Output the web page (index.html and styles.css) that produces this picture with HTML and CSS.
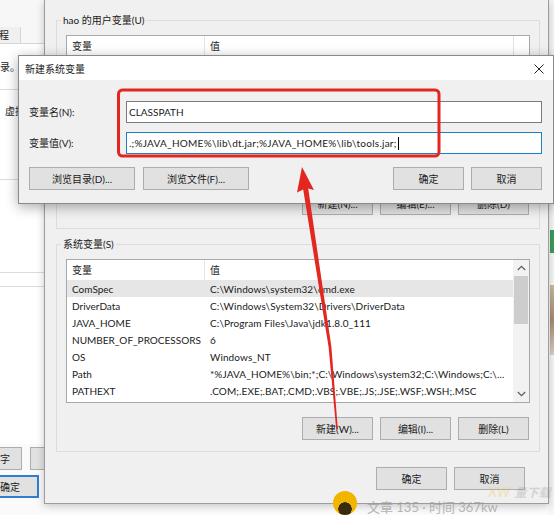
FILE: index.html
```html
<!DOCTYPE html>
<html lang="zh-CN">
<head>
<meta charset="utf-8">
<title>新建系统变量</title>
<link rel="stylesheet" href="styles.css">
</head>
<body>
<div class="desk">
  <div class="strip">
    <div class="strip-green"></div>
    <div class="strip-photo"></div>
  </div>

  <aside class="sp">
    <div class="sp-head"></div>
    <div class="sp-tabs"><span class="sp-tab"><span>程</span></span></div>
    <div class="sp-panel">
      <div class="sp-text t1"><span>录。</span></div>
      <div class="sp-rule r1"></div>
      <div class="sp-text t2"><span>虚拟</span></div>
      <div class="sp-rule r2"></div>
      <div class="sp-rule r3"></div>
      <div class="sp-rule r4"></div>
    </div>
    <div class="sp-foot">
      <div class="sp-row one"><span class="sp-btn b1"><span>字</span></span><span class="sp-btn b2"></span></div>
      <div class="sp-row two"><span class="sp-btn ok"><span>确定</span></span></div>
    </div>
  </aside>

  <section class="env">
    <div class="group g-user">
      <div class="group-label">hao 的用户变量(U)</div>
      <div class="list list-user">
        <div class="lv-main">
          <div class="lv-head"><span class="c1">变量</span><span class="c2">值</span></div>
        </div>
        <div class="scroll"></div>
      </div>
      <div class="btn-row">
        <button class="btn">新建(N)...</button>
        <button class="btn">编辑(E)...</button>
        <button class="btn">删除(D)</button>
      </div>
    </div>

    <div class="group g-sys">
      <div class="group-label">系统变量(S)</div>
      <div class="list list-sys">
        <div class="lv-main">
          <div class="lv-head"><span class="c1">变量</span><span class="c2">值</span></div>
          <div class="lv-row sel"><span class="c1">ComSpec</span><span class="c2">C:\Windows\system32\cmd.exe</span></div>
          <div class="lv-row"><span class="c1">DriverData</span><span class="c2">C:\Windows\System32\Drivers\DriverData</span></div>
          <div class="lv-row"><span class="c1">JAVA_HOME</span><span class="c2">C:\Program Files\Java\jdk1.8.0_111</span></div>
          <div class="lv-row"><span class="c1">NUMBER_OF_PROCESSORS</span><span class="c2">6</span></div>
          <div class="lv-row"><span class="c1">OS</span><span class="c2">Windows_NT</span></div>
          <div class="lv-row"><span class="c1">Path</span><span class="c2">*%JAVA_HOME%\bin;*;C:\Windows\system32;C:\Windows;C:\...</span></div>
          <div class="lv-row"><span class="c1">PATHEXT</span><span class="c2">.COM;.EXE;.BAT;.CMD;.VBS;.VBE;.JS;.JSE;.WSF;.WSH;.MSC</span></div>
        </div>
        <div class="scroll">
          <span class="sb-btn"><svg width="9" height="6" viewBox="0 0 9 6"><path d="M0.8 5 L4.5 1.3 L8.2 5" fill="none" stroke="#606060" stroke-width="1.3"/></svg></span>
          <span class="sb-thumb"></span>
          <span class="sb-track"></span>
          <span class="sb-btn"><svg width="9" height="6" viewBox="0 0 9 6"><path d="M0.8 1 L4.5 4.7 L8.2 1" fill="none" stroke="#606060" stroke-width="1.3"/></svg></span>
        </div>
      </div>
      <div class="btn-row">
        <button class="btn">新建(W)...</button>
        <button class="btn">编辑(I)...</button>
        <button class="btn">删除(L)</button>
      </div>
    </div>

    <div class="env-foot">
      <button class="btn">确定</button>
      <button class="btn">取消</button>
    </div>
  </section>

  <section class="dlg">
    <header class="dlg-title">
      <span>新建系统变量</span>
      <svg class="close" width="10" height="10" viewBox="0 0 10 10"><path d="M0.5 0.5 L9.5 9.5 M9.5 0.5 L0.5 9.5" stroke="#222" stroke-width="1"/></svg>
    </header>
    <div class="dlg-body">
      <div class="dlg-row">
        <label class="dlg-label">变量名(N):</label>
        <div class="field">CLASSPATH</div>
      </div>
      <div class="dlg-row">
        <label class="dlg-label">变量值(V):</label>
        <div class="field focus"><span class="caret">.;%JAVA_HOME%\lib\dt.jar;%JAVA_HOME%\lib\tools.jar;</span></div>
      </div>
      <div class="dlg-btns">
        <button class="btn wide">浏览目录(D)...</button>
        <button class="btn wide">浏览文件(F)...</button>
        <span class="spacer"></span>
        <button class="btn">确定</button>
        <button class="btn">取消</button>
      </div>
    </div>
  </section>

  <div class="bottom-note">
    <span class="avatar"></span>
    <span class="note-text">文章 135 · 时间 367kw</span>
  </div>
  <div class="watermark"><span class="wm-x">XW</span><span class="wm-t">量下载</span></div>

  <svg class="annot" width="554" height="515" viewBox="0 0 554 515">
    <rect x="118.5" y="90" width="320.5" height="66" rx="4" ry="4" fill="none" stroke="#e3261f" stroke-width="3"/>
    <polygon fill="#e3261f" points="302,167 314,190 308.2,188.6 331.4,347 337.8,429 336.2,429 328.6,347 303.2,189.4 297,192.5"/>
  </svg>
</div>
</body>
</html>
```

FILE: styles.css
```css
* { box-sizing: border-box; }

html, body {
  margin: 0;
  padding: 0;
}

body {
  width: 554px;
  height: 515px;
  overflow: hidden;
  background: #ffffff;
  font-family: Lato, "Noto Sans CJK SC", sans-serif;
  font-size: 10px;
  line-height: 12px;
  color: #1a1a1a;
}

.desk {
  position: relative;
  width: 554px;
  height: 515px;
  overflow: hidden;
  background: #fbfbfb;
}

/* desktop strip on the right */
.strip {
  position: absolute;
  left: 549px;
  top: 0;
  width: 5px;
  height: 515px;
  display: flex;
  flex-direction: column;
  background: #f6f6f6;
}
.strip-green {
  margin-top: 230px;
  height: 23px;
  margin-left: 1px;
  background: #3a9b5c;
}
.strip-photo {
  margin-top: 32px;
  height: 70px;
  margin-left: 1px;
  background: linear-gradient(#c9b8a4, #a48a70 50%, #d8cfc4);
}

/* System properties window behind */
.sp {
  position: absolute;
  left: 0;
  top: 0;
  width: 45px;
  height: 515px;
  display: flex;
  flex-direction: column;
  background: #f4f4f4;
}
.sp-head { height: 27px; background: #f7f7f7; }
.sp-tabs {
  height: 17px;
  display: flex;
  border-bottom: 1px solid #d6d6d6;
  background: #f7f7f7;
}
.sp-tab {
  width: 21px;
  display: flex;
  justify-content: flex-end;
  align-items: center;
  border-right: 1px solid #d6d6d6;
  background: #f0f0f0;
  padding-right: 11px;
  white-space: nowrap;
}
.sp-panel {
  height: 400px;
  background: #ffffff;
  display: flex;
  flex-direction: column;
}
.sp-text {
  display: flex;
  white-space: nowrap;
  height: 12px;
}
.sp-text.t1 { margin-top: 17px; }
.sp-text.t2 { margin-top: 15px; padding-left: 5px; }
.sp-rule { height: 1px; background: #dcdcdc; }
.sp-rule.r1 { margin-top: 16px; }
.sp-rule.r2 { margin-top: 62px; }
.sp-rule.r3 { margin-top: 92px; }
.sp-rule.r4 { margin-top: 13px; }
.sp-foot {
  flex: 1;
  background: #fafafa;
  display: flex;
  flex-direction: column;
}
.sp-row { display: flex; gap: 8px; }
.sp-row.one { margin-top: 3px; }
.sp-row.two { margin-top: 5px; }
.sp-btn {
  height: 23px;
  display: flex;
  align-items: center;
  white-space: nowrap;
  background: #e1e1e1;
  border: 1px solid #adadad;
  border-left: none;
}
.sp-btn.b1 { width: 29px; }
.sp-btn.b2 { width: 20px; border-left: 1px solid #adadad; border-right: none; }
.sp-btn.ok {
  width: 39px;
  height: 23px;
  border: 2px solid #2f7fd0;
  border-left: none;
}

/* Environment variables window */
.env {
  position: absolute;
  left: 44px;
  top: 0;
  width: 505px;
  height: 504px;
  background: #f0f0f0;
  border: 1px solid #9c9c9c;
  border-top: none;
  box-shadow: 0 2px 8px rgba(0, 0, 0, 0.22);
  padding: 20px 8px 0 11px;
  display: flex;
  flex-direction: column;
}

.group {
  border: 1px solid #dcdcdc;
  display: flex;
  flex-direction: column;
  padding: 0 9px;
}
.group-label {
  align-self: flex-start;
  margin: -7px 0 0 -5px;
  padding: 0 2px;
  background: #f0f0f0;
  height: 12px;
  white-space: nowrap;
}
.g-user { height: 209px; }
.g-sys { height: 208px; margin-top: 15px; }

.list {
  display: flex;
  background: #ffffff;
  border: 1px solid #a8a8a8;
  margin-top: 9px;
}
.list-user { height: 150px; }
.list-sys { height: 144px; }

.lv-main {
  flex: 1;
  display: flex;
  flex-direction: column;
  min-width: 0;
}
.lv-head {
  height: 20px;
  display: flex;
  align-items: center;
}
.lv-head .c1 { border-right: 1px solid #e5e5e5; height: 20px; display: flex; align-items: center; }
.lv-row {
  height: 17px;
  display: flex;
  align-items: center;
  white-space: nowrap;
}
.lv-row.sel { background: #e6e6e6; }
.c1 {
  width: 138px;
  flex: none;
  padding-left: 5px;
}
.c2 {
  padding-left: 5px;
  overflow: hidden;
  letter-spacing: 0.1px;
}

.scroll {
  width: 16px;
  flex: none;
  display: flex;
  flex-direction: column;
  background: #f2f2f2;
}
.list-user .scroll { background: #ffffff; border-left: 1px solid #e2e2e2; }
.sb-btn {
  height: 16px;
  display: flex;
  align-items: center;
  justify-content: center;
}
.sb-thumb {
  height: 48px;
  margin: 0 1px;
  background: #cdcdcd;
}
.sb-track { flex: 1; }

.btn-row {
  display: flex;
  justify-content: flex-end;
  gap: 7px;
  margin-top: 7px;
  padding-right: 1px;
}
.g-sys .btn-row { margin-top: 14px; }

.btn {
  font: inherit;
  color: inherit;
  width: 71px;
  height: 23px;
  padding: 0;
  margin: 0;
  display: flex;
  align-items: center;
  justify-content: center;
  background: #e1e1e1;
  border: 1px solid #adadad;
  border-radius: 0;
  white-space: nowrap;
}

.env-foot {
  display: flex;
  justify-content: flex-end;
  gap: 7px;
  margin-top: 15px;
  padding-right: 15px;
}

/* New system variable dialog */
.dlg {
  position: absolute;
  left: 18px;
  top: 55px;
  width: 536px;
  height: 149px;
  background: #f0f0f0;
  border: 1px solid #8a8a8a;
  box-shadow: 0 3px 12px rgba(0, 0, 0, 0.33);
  display: flex;
  flex-direction: column;
}
.dlg-title {
  height: 24px;
  background: #ffffff;
  display: flex;
  align-items: center;
  justify-content: space-between;
  padding: 1px 9px 0 6px;
}
.dlg-body {
  flex: 1;
  display: flex;
  flex-direction: column;
  padding: 21px 11px 0 10px;
}
.dlg-row {
  display: flex;
  align-items: center;
  height: 22px;
}
.dlg-row + .dlg-row { margin-top: 9px; }
.dlg-label {
  width: 97px;
  flex: none;
}
.field {
  flex: 1;
  height: 22px;
  background: #ffffff;
  border: 1px solid #7a7a7a;
  display: flex;
  align-items: center;
  padding-left: 2px;
  white-space: nowrap;
}
.field.focus { border-color: #1d7fc4; letter-spacing: 0.25px; }
.caret { display: flex; align-items: center; }
.caret::after {
  content: "";
  width: 1px;
  height: 13px;
  margin-left: 1px;
  background: #000;
}
.dlg-btns {
  display: flex;
  gap: 7px;
  margin-top: 13px;
}
.dlg-btns .btn.wide { width: 106px; }
.dlg-btns .btn.wide + .btn.wide { margin-left: 1px; }
.spacer { flex: 1; }

/* bottom page content peeking through + watermark */
.bottom-note {
  position: absolute;
  left: 333px;
  top: 491px;
  display: flex;
  align-items: center;
  gap: 10px;
}
.avatar {
  width: 24px;
  height: 24px;
  border-radius: 50%;
  background: radial-gradient(circle at 50% 75%, #3a2a10 0 30%, #f1b500 32%);
}
.note-text {
  font-size: 13px;
  color: #9a9a9a;
  opacity: 0.7;
  margin-top: 8px;
  white-space: nowrap;
}
.watermark {
  position: absolute;
  left: 488px;
  top: 486px;
  display: flex;
  align-items: baseline;
  gap: 4px;
  font-size: 14px;
  font-weight: bold;
  font-style: italic;
  opacity: 0.28;
  white-space: nowrap;
}
.wm-x { color: #e8c24a; }
.wm-t { color: #8a8a8a; font-size: 12px; }

.annot {
  position: absolute;
  left: 0;
  top: 0;
  pointer-events: none;
}
```
